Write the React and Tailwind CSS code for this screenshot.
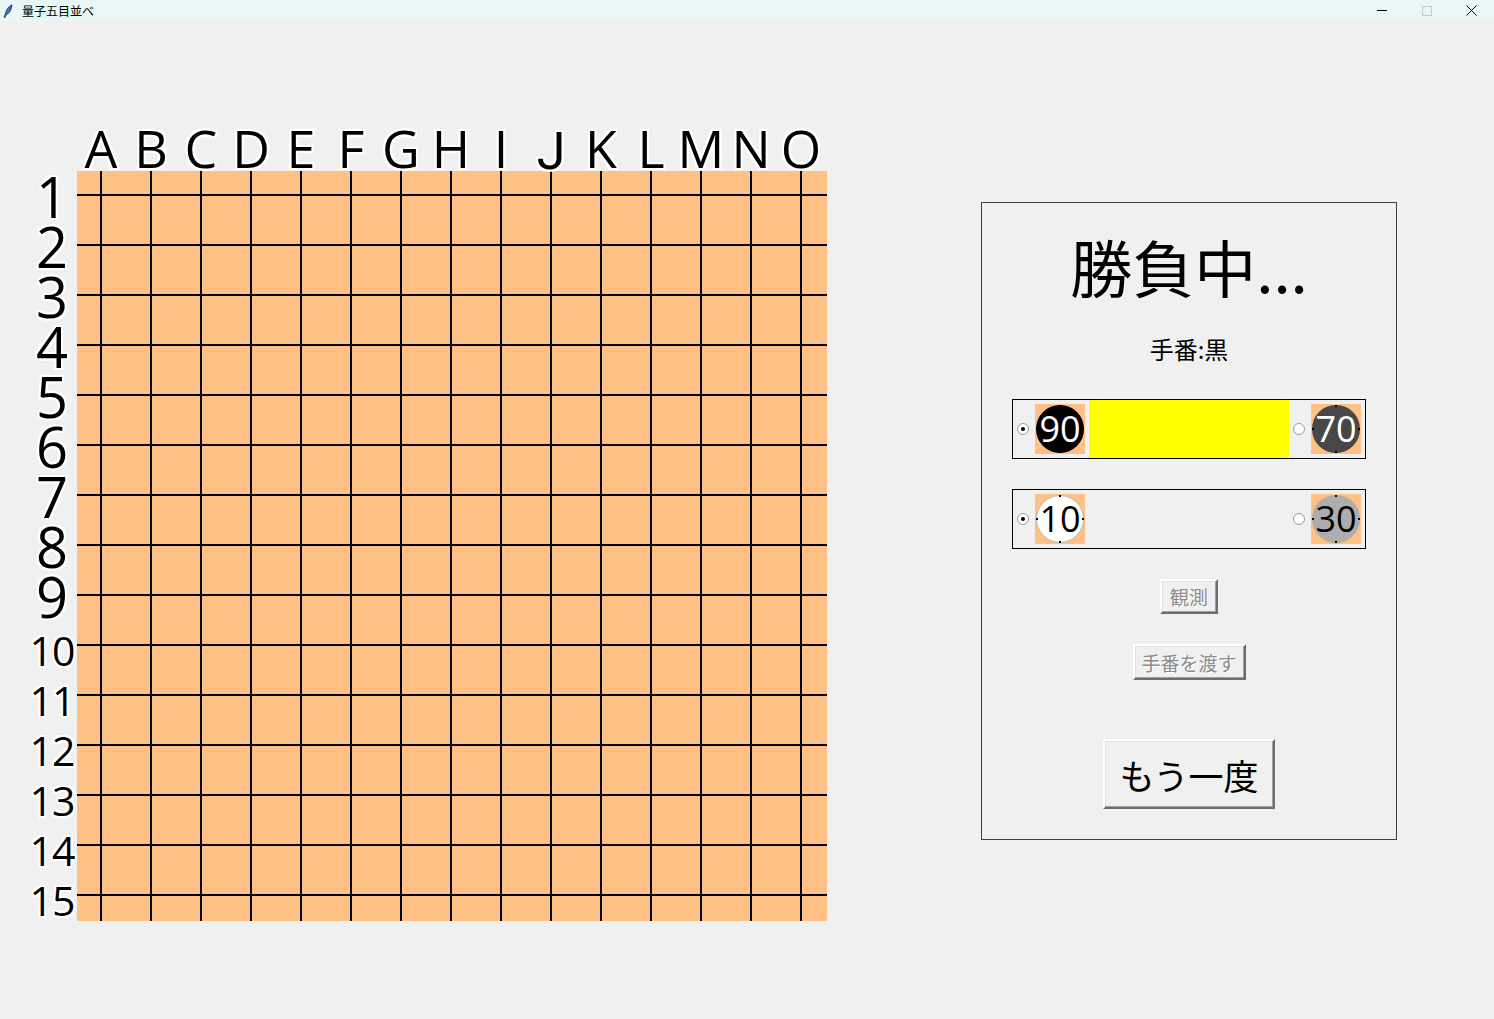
import React from "react";

const COLS = "ABCDEFGHIJKLMNO".split("");
const ROWS = Array.from({ length: 15 }, (_, i) => i + 1);
const LINES = Array.from({ length: 15 }, (_, i) => 24 + i * 50);

const outline =
  "[text-shadow:2px_0_0_#fff,-2px_0_0_#fff,0_2px_0_#fff,0_-2px_0_#fff,2px_2px_0_#fff,-2px_-2px_0_#fff,2px_-2px_0_#fff,-2px_2px_0_#fff]";

function TitleBar() {
  return (
    <div className="h-[21px] bg-[#e6f7f6] flex items-center text-[12px] text-black font-['Noto_Sans_CJK_JP',sans-serif]">
      <svg width="10" height="14" viewBox="0 0 10 14" className="ml-[3px]">
        <path d="M9 0.8 C5.5 2.5 3 6 2.2 10.5 L1 13.5 L1.8 13.6 L3 11 C6.5 9.5 8.6 5.5 9 0.8 Z" fill="#3d6fc4" stroke="#1b2f5c" strokeWidth="0.8" />
      </svg>
      <span className="ml-[9px] leading-none">量子五目並べ</span>
      <div className="ml-auto flex items-center h-full">
        <div className="w-[45px] h-full flex items-center justify-center">
          <div className="w-[10px] h-[1px] bg-black" />
        </div>
        <div className="w-[45px] h-full flex items-center justify-center">
          <div className="w-[10px] h-[10px] border border-[#c4c8c8]" />
        </div>
        <div className="w-[45px] h-full flex items-center justify-center">
          <svg width="11" height="11" viewBox="0 0 11 11">
            <path d="M0.5 0.5 L10.5 10.5 M10.5 0.5 L0.5 10.5" stroke="#000" strokeWidth="1" />
          </svg>
        </div>
      </div>
    </div>
  );
}

function Board() {
  return (
    <svg width="750" height="750" viewBox="0 0 750 750" className="block">
      <rect x="0" y="0" width="750" height="750" fill="#ffc183" />
      {LINES.map((p) => (
        <g key={p}>
          <line x1={p} y1="0" x2={p} y2="750" stroke="#000" strokeWidth="2" />
          <line x1="0" y1={p} x2="750" y2={p} stroke="#000" strokeWidth="2" />
        </g>
      ))}
    </svg>
  );
}

function Radio({ checked }) {
  return (
    <div className="w-[12px] h-[12px] rounded-full border border-[#9a9a9a] bg-white flex items-center justify-center shrink-0">
      {checked && <div className="w-[4px] h-[4px] rounded-full bg-black" />}
    </div>
  );
}

function Stone({ value, circle, text }) {
  return (
    <div className="relative w-[50px] h-[50px] bg-[#ffc183] flex items-center justify-center shrink-0">
      <div className={`w-[48px] h-[48px] rounded-full flex items-center justify-center ${circle}`}>
        <span className={`text-[36px] leading-none font-['Open_Sans',sans-serif] ${text}`}>{value}</span>
      </div>
      <span className="absolute top-[1px] left-[24px] w-[2px] h-[2px] bg-black" />
      <span className="absolute bottom-[1px] left-[24px] w-[2px] h-[2px] bg-black" />
      <span className="absolute left-[1px] top-[24px] w-[2px] h-[2px] bg-black" />
      <span className="absolute right-[1px] top-[24px] w-[2px] h-[2px] bg-black" />
    </div>
  );
}

function StoneRow({ left, right, bar }) {
  return (
    <div className="mx-[30px] h-[60px] border border-black flex items-stretch pl-[4px]">
      <div className="flex items-center">
        <Radio checked />
      </div>
      <div className="flex items-center ml-[6px]">
        <Stone {...left} />
      </div>
      <div className={`w-[200px] ml-[4px] ${bar ? "bg-[#ffff00]" : ""}`} />
      <div className="flex items-center ml-[4px]">
        <Radio />
      </div>
      <div className="flex items-center ml-[6px]">
        <Stone {...right} />
      </div>
    </div>
  );
}

const raised =
  "bg-[#f0f0f0] border-t-[2px] border-l-[2px] border-r-[2px] border-b-[2px] border-t-white border-l-white border-r-[#6e6e6e] border-b-[#6e6e6e] shadow-[inset_-1px_-1px_0_#a0a0a0,inset_1px_1px_0_#e3e3e3]";

export default function App() {
  return (
    <div className="w-[1494px] h-[1019px] bg-[#f0f0f0] flex flex-col overflow-hidden">
      <TitleBar />
      <div className="flex items-start">
        <div className="mt-[100px] flex flex-col font-['Open_Sans',sans-serif] text-black">
          <div className="flex h-[50px] items-end">
            <div className="w-[76px] shrink-0" />
            {COLS.map((c) => (
              <div
                key={c}
                className={`w-[50px] shrink-0 text-center text-[52px] leading-none relative z-10 ${
                  c === "J" ? "font-['Roboto',sans-serif] translate-y-[7px]" : "translate-y-[3px]"
                } ${outline}`}
              >
                {c}
              </div>
            ))}
          </div>
          <div className="flex">
            <div className="w-[77px] pl-[27px] flex flex-col shrink-0">
              {ROWS.map((r) => (
                <div
                  key={r}
                  className={`h-[50px] w-[50px] flex items-center justify-center leading-[50px] ${
                    r < 10 ? "text-[56px]" : "text-[41px] tracking-[-1px] translate-y-[4px]"
                  } ${outline}`}
                >
                  {r}
                </div>
              ))}
            </div>
            <Board />
          </div>
        </div>

        <div className="ml-[154px] mt-[181px] w-[416px] h-[638px] border border-[#404040] flex flex-col items-stretch font-['Noto_Sans_CJK_JP',sans-serif] text-black">
          <div className="mt-[32px] text-center text-[62px] leading-none">勝負中...</div>
          <div className="mt-[40px] text-center text-[24px] leading-none">手番:黒</div>
          <div className="mt-[38px]">
            <StoneRow
              bar
              left={{ value: "90", circle: "bg-black", text: "text-white" }}
              right={{ value: "70", circle: "bg-[#474747]", text: "text-white" }}
            />
          </div>
          <div className="mt-[30px]">
            <StoneRow
              left={{ value: "10", circle: "bg-white border border-[#b8b8b8]", text: "text-black" }}
              right={{ value: "30", circle: "bg-[#adadad]", text: "text-black" }}
            />
          </div>
          <div className="mt-[30px] flex justify-center">
            <button
              disabled
              className={`w-[58px] h-[35px] text-[19px] leading-none text-[#8c8c8c] [text-shadow:1px_1px_0_#fff] ${raised}`}
            >
              観測
            </button>
          </div>
          <div className="mt-[30px] flex justify-center">
            <button
              disabled
              className={`w-[113px] h-[36px] text-[19px] leading-none text-[#8c8c8c] [text-shadow:1px_1px_0_#fff] ${raised}`}
            >
              手番を渡す
            </button>
          </div>
          <div className="mt-[59px] flex justify-center">
            <button className={`w-[172px] h-[70px] text-[35px] leading-none text-black ${raised}`}>
              もう一度
            </button>
          </div>
        </div>
      </div>
    </div>
  );
}
